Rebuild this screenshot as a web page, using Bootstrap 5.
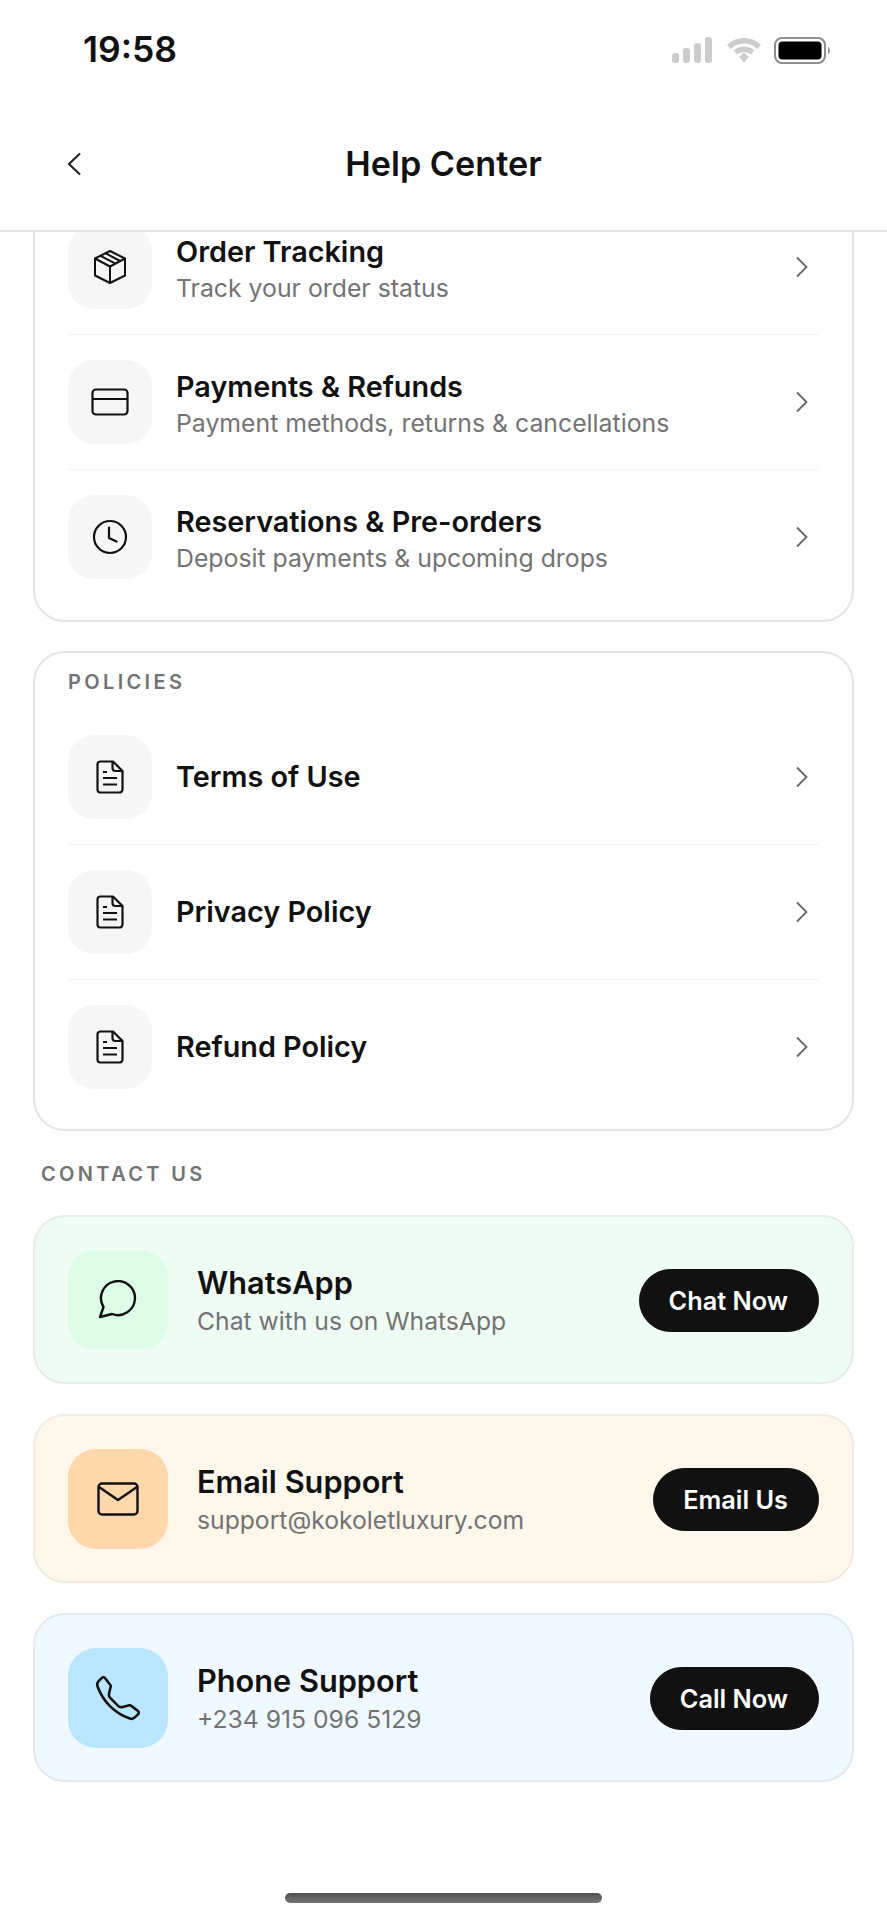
<!DOCTYPE html>
<html lang="en">
<head>
    <meta charset="UTF-8">
    <meta name="viewport" content="width=device-width, initial-scale=1.0">
    <title>Help Center</title>
    <link href="https://cdn.jsdelivr.net/npm/bootstrap@5.3.3/dist/css/bootstrap.min.css" rel="stylesheet">
    <style>
        body { font-family: Inter, "Liberation Sans", sans-serif; color: #111; background: #fff; }
        svg { display: block; flex-shrink: 0; }
        .screen { width: 887px; height: 1920px; overflow: hidden; }
        .status-bar { height: 100px; padding: 0 56px 0 83px; }
        .clock { font-size: 35.5px; font-weight: 600; line-height: 1; }
        .signal-gap { margin-left: 15px; }
        .battery-gap { margin-left: 13px; }
        .top-bar { height: 132px; padding: 0 66px 2px; border-bottom: 2px solid #e5e5e5; }
        .back-btn { left: 66px; top: 49%; transform: translateY(-50%); }
        .page-title { font-size: 34.2px; font-weight: 600; line-height: 1; margin: 0; }
        .scroll-area { padding: 0 33px; min-height: 0; }
        .menu-card { border: 2px solid #e5e5e5; border-radius: 32px; padding: 0 33px 15px; background: #fff; }
        .menu-card-first { margin-top: -34px; margin-bottom: 29px; padding-bottom: 16px; }
        .menu-row { padding: 25px 0; border-bottom: 1px solid #f3f3f3; }
        .menu-row:last-child { border-bottom: 0; }
        .menu-icon { width: 84px; height: 84px; border-radius: 26px; background: #f6f6f6; }
        .menu-title { font-size: 28.8px; font-weight: 600; line-height: 36px; }
        .menu-sub { font-size: 24.8px; line-height: 36px; color: #737373; }
        .two-line { padding-top: 5px; }
        .row-chevron { margin-right: 11px; }
        .section-label { font-size: 20px; font-weight: 600; letter-spacing: 3.35px; line-height: 24px; color: #737373; }
        .label-inside { padding-top: 17px; margin-bottom: 16px; }
        .label-outside { padding: 0 8px; margin: 31px 0 29px; }
        .contact-card { height: 169px; border-radius: 32px; padding: 0 33px; margin-bottom: 30px; border: 2px solid; }
        .contact-icon { width: 100px; height: 100px; border-radius: 28px; margin-right: 29px; }
        .contact-text { padding-top: 5px; }
        .contact-text .menu-title { font-size: 30.7px; line-height: 38px; }
        .contact-text .menu-sub { font-size: 24.7px; line-height: 38px; }
        .c-green { background: #effcf4; border-color: #e6ece8; }
        .c-green .contact-icon { background: #dcfce7; }
        .c-orange { background: #fdf7ec; border-color: #f0ebe3; }
        .c-orange .contact-icon { background: #fed7aa; }
        .c-blue { background: #f0f9ff; border-color: #e3e9ee; }
        .c-blue .contact-icon { background: #bae6fd; }
        .action-btn { background: #111; border-color: #111; color: #fff; font-size: 25.3px; font-weight: 600; line-height: 1; height: 63px; padding: 0 30px 0 29px; margin-top: 2px; }
        .home-bar { left: 285px; top: 1893px; width: 317px; height: 10px; border-radius: 5px; background: linear-gradient(#505050, #757575); }
    </style>
</head>
<body>
    <div class="screen position-relative d-flex flex-column">
        <div class="status-bar d-flex align-items-center justify-content-between flex-shrink-0">
            <span class="clock">19:58</span>
            <div class="d-flex align-items-center">
                <svg width="40" height="26" viewBox="0 0 40 26" fill="#ccc"><rect x="0" y="16" width="7" height="10" rx="3"/><rect x="11" y="11" width="7" height="15" rx="3"/><rect x="22" y="6" width="7" height="20" rx="3"/><rect x="33" y="0" width="7" height="26" rx="3"/></svg>
                <svg class="signal-gap" width="34" height="26" viewBox="0 0 34 26" fill="none" stroke="#ccc" stroke-width="5.500"><path d="M2 10 C10 1.500 24 1.500 32 10"/><path d="M8.500 15.500 C13 11 21 11 25.500 15.500"/><path d="M12 20 L17 15.500 L22 20 L17 25.500 Z" fill="#ccc" stroke="none"/></svg>
                <svg class="battery-gap" width="57" height="27" viewBox="0 0 57 27"><rect x="1" y="1" width="50" height="25" rx="7" fill="#fff" stroke="#8e8e8e" stroke-width="2"/><rect x="4.500" y="4.500" width="43" height="18" rx="4" fill="#000"/><path d="M54 10 C56.500 11 56.500 16 54 17 Z" fill="#8e8e8e"/></svg>
            </div>
        </div>

        <div class="top-bar position-relative d-flex align-items-center justify-content-center flex-shrink-0 bg-white z-1">
            <svg class="back-btn position-absolute" width="16" height="24" viewBox="0 0 16 24" fill="none" stroke="#222" stroke-width="2.200"><path d="M14 1.500 L3 12 L14 22.500"/></svg>
            <h1 class="page-title">Help Center</h1>
        </div>

        <div class="scroll-area flex-grow-1">
            <div class="menu-card menu-card-first">
                <div class="menu-row d-flex align-items-center">
                    <div class="menu-icon d-flex align-items-center justify-content-center me-4">
                        <svg width="34" height="36" viewBox="0 0 34 36" fill="none" stroke="#111" stroke-width="2" stroke-linejoin="round"><path d="M17 2 L32 9.500 V26.500 L17 34 L2 26.500 V9.500 Z"/><path d="M2 9.500 L17 17.500 L32 9.500"/><path d="M17 17.500 V34"/><path d="M7.500 6.800 L22.500 14.700 M12.500 4.200 L27 12"/></svg>
                    </div>
                    <div class="two-line flex-grow-1">
                        <div class="menu-title">Order Tracking</div>
                        <div class="menu-sub">Track your order status</div>
                    </div>
                    <svg class="row-chevron" width="13" height="22" viewBox="0 0 13 22" fill="none" stroke="#666" stroke-width="1.800"><path d="M2 1.500 L11.500 11 L2 20.500"/></svg>
                </div>
                <div class="menu-row d-flex align-items-center">
                    <div class="menu-icon d-flex align-items-center justify-content-center me-4">
                        <svg width="38" height="28" viewBox="0 0 38 28" fill="none" stroke="#111" stroke-width="2.200"><rect x="1.500" y="1.500" width="35" height="25" rx="3.500"/><path d="M1.500 11 H36.500"/></svg>
                    </div>
                    <div class="two-line flex-grow-1">
                        <div class="menu-title">Payments &amp; Refunds</div>
                        <div class="menu-sub">Payment methods, returns &amp; cancellations</div>
                    </div>
                    <svg class="row-chevron" width="13" height="22" viewBox="0 0 13 22" fill="none" stroke="#666" stroke-width="1.800"><path d="M2 1.500 L11.500 11 L2 20.500"/></svg>
                </div>
                <div class="menu-row d-flex align-items-center">
                    <div class="menu-icon d-flex align-items-center justify-content-center me-4">
                        <svg width="36" height="36" viewBox="0 0 36 36" fill="none" stroke="#111" stroke-width="2.200" stroke-linecap="round" stroke-linejoin="round"><circle cx="18" cy="18" r="16"/><path d="M17 8.500 V19 L24.500 22.500"/></svg>
                    </div>
                    <div class="two-line flex-grow-1">
                        <div class="menu-title">Reservations &amp; Pre-orders</div>
                        <div class="menu-sub">Deposit payments &amp; upcoming drops</div>
                    </div>
                    <svg class="row-chevron" width="13" height="22" viewBox="0 0 13 22" fill="none" stroke="#666" stroke-width="1.800"><path d="M2 1.500 L11.500 11 L2 20.500"/></svg>
                </div>
            </div>

            <div class="menu-card">
                <div class="section-label label-inside">POLICIES</div>
                <div class="menu-row d-flex align-items-center">
                    <div class="menu-icon d-flex align-items-center justify-content-center me-4">
                        <svg width="28" height="34" viewBox="0 0 28 34" fill="none" stroke="#111" stroke-width="2.200" stroke-linejoin="round"><path d="M4 1.500 H17 L26.500 11 V29.500 A3 3 0 0 1 23.500 32.500 H4.500 A3 3 0 0 1 1.500 29.500 V4 A3 3 0 0 1 4 1.500 Z"/><path d="M16.500 1.500 V8 A3 3 0 0 0 19.500 11 H26.500"/><path d="M7 12 H11 M7 18 H21 M7 24.500 H21"/></svg>
                    </div>
                    <div class="menu-title flex-grow-1">Terms of Use</div>
                    <svg class="row-chevron" width="13" height="22" viewBox="0 0 13 22" fill="none" stroke="#666" stroke-width="1.800"><path d="M2 1.500 L11.500 11 L2 20.500"/></svg>
                </div>
                <div class="menu-row d-flex align-items-center">
                    <div class="menu-icon d-flex align-items-center justify-content-center me-4">
                        <svg width="28" height="34" viewBox="0 0 28 34" fill="none" stroke="#111" stroke-width="2.200" stroke-linejoin="round"><path d="M4 1.500 H17 L26.500 11 V29.500 A3 3 0 0 1 23.500 32.500 H4.500 A3 3 0 0 1 1.500 29.500 V4 A3 3 0 0 1 4 1.500 Z"/><path d="M16.500 1.500 V8 A3 3 0 0 0 19.500 11 H26.500"/><path d="M7 12 H11 M7 18 H21 M7 24.500 H21"/></svg>
                    </div>
                    <div class="menu-title flex-grow-1">Privacy Policy</div>
                    <svg class="row-chevron" width="13" height="22" viewBox="0 0 13 22" fill="none" stroke="#666" stroke-width="1.800"><path d="M2 1.500 L11.500 11 L2 20.500"/></svg>
                </div>
                <div class="menu-row d-flex align-items-center">
                    <div class="menu-icon d-flex align-items-center justify-content-center me-4">
                        <svg width="28" height="34" viewBox="0 0 28 34" fill="none" stroke="#111" stroke-width="2.200" stroke-linejoin="round"><path d="M4 1.500 H17 L26.500 11 V29.500 A3 3 0 0 1 23.500 32.500 H4.500 A3 3 0 0 1 1.500 29.500 V4 A3 3 0 0 1 4 1.500 Z"/><path d="M16.500 1.500 V8 A3 3 0 0 0 19.500 11 H26.500"/><path d="M7 12 H11 M7 18 H21 M7 24.500 H21"/></svg>
                    </div>
                    <div class="menu-title flex-grow-1">Refund Policy</div>
                    <svg class="row-chevron" width="13" height="22" viewBox="0 0 13 22" fill="none" stroke="#666" stroke-width="1.800"><path d="M2 1.500 L11.500 11 L2 20.500"/></svg>
                </div>
            </div>

            <div class="section-label label-outside">CONTACT US</div>

            <div class="contact-card c-green d-flex align-items-center">
                <div class="contact-icon d-flex align-items-center justify-content-center">
                    <svg width="40" height="40" viewBox="0 0 40 40" fill="none" stroke="#111" stroke-width="2.400" stroke-linejoin="round"><path d="M5.500 27 A17 17 0 1 1 14 34 L2 37 Z"/></svg>
                </div>
                <div class="contact-text flex-grow-1">
                    <div class="menu-title">WhatsApp</div>
                    <div class="menu-sub">Chat with us on WhatsApp</div>
                </div>
                <a href="#" class="btn action-btn rounded-pill d-flex align-items-center">Chat Now</a>
            </div>
            <div class="contact-card c-orange d-flex align-items-center">
                <div class="contact-icon d-flex align-items-center justify-content-center">
                    <svg width="42" height="34" viewBox="0 0 42 34" fill="none" stroke="#111" stroke-width="2.400" stroke-linejoin="round"><rect x="1.500" y="1.500" width="39" height="31" rx="3.500"/><path d="M2 5 L21 18 L40 5"/></svg>
                </div>
                <div class="contact-text flex-grow-1">
                    <div class="menu-title">Email Support</div>
                    <div class="menu-sub">support@kokoletluxury.com</div>
                </div>
                <a href="#" class="btn action-btn rounded-pill d-flex align-items-center">Email Us</a>
            </div>
            <div class="contact-card c-blue d-flex align-items-center mb-0">
                <div class="contact-icon d-flex align-items-center justify-content-center">
                    <svg width="48" height="48" viewBox="0 0 16 16" fill="none" stroke="#111" stroke-width=".85" stroke-linejoin="round"><path d="M3.654 1.328a.678.678 0 0 0-1.015-.063L1.605 2.300c-.483.484-.661 1.169-.45 1.770a17.600 17.600 0 0 0 4.168 6.608 17.600 17.600 0 0 0 6.608 4.168c.601.211 1.286.033 1.770-.45l1.034-1.034a.678.678 0 0 0-.063-1.015l-2.307-1.794a.68.68 0 0 0-.58-.122l-2.190.547a1.750 1.750 0 0 1-1.657-.459L5.482 8.062a1.750 1.750 0 0 1-.46-1.657l.548-2.190a.68.68 0 0 0-.122-.58z"/></svg>
                </div>
                <div class="contact-text flex-grow-1">
                    <div class="menu-title">Phone Support</div>
                    <div class="menu-sub">+234 915 096 5129</div>
                </div>
                <a href="#" class="btn action-btn rounded-pill d-flex align-items-center">Call Now</a>
            </div>
        </div>

        <div class="home-bar position-absolute"></div>
    </div>
    <script src="https://cdn.jsdelivr.net/npm/bootstrap@5.3.3/dist/js/bootstrap.bundle.min.js"></script>
</body>
</html>
